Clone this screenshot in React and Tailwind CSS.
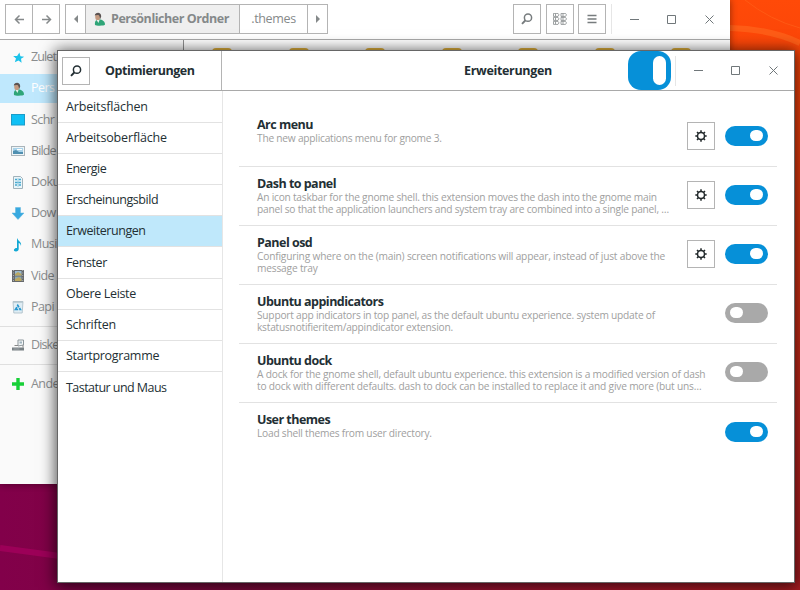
import React from 'react';

const places = [
    { label: 'Zulet', icon: 'star' },
    { label: 'Pers', icon: 'person', active: true },
    { label: 'Schr', icon: 'desktop' },
    { label: 'Bilde', icon: 'image' },
    { label: 'Doku', icon: 'doc' },
    { label: 'Dow', icon: 'download' },
    { label: 'Musi', icon: 'music' },
    { label: 'Vide', icon: 'video' },
    { label: 'Papi', icon: 'trash' },
];

const categories = [
    { label: 'Arbeitsflächen', tracking: 'tracking-[-0.15px]' },
    { label: 'Arbeitsoberfläche', tracking: 'tracking-[-0.15px]' },
    { label: 'Energie', tracking: 'tracking-[-0.5px]' },
    { label: 'Erscheinungsbild', tracking: 'tracking-[-0.44px]' },
    { label: 'Erweiterungen', tracking: 'tracking-[-0.44px]', active: true },
    { label: 'Fenster', tracking: 'tracking-[-0.4px]' },
    { label: 'Obere Leiste', tracking: 'tracking-[-0.33px]' },
    { label: 'Schriften', tracking: 'tracking-[-0.25px]' },
    { label: 'Startprogramme', tracking: 'tracking-[-0.28px]' },
    { label: 'Tastatur und Maus', tracking: 'tracking-[-0.54px]' },
];

const extensions = [
    { title: 'Arc menu', lines: ['The new applications menu for gnome 3.'], settings: true, on: true },
    {
        title: 'Dash to panel',
        lines: [
            'An icon taskbar for the gnome shell. this extension moves the dash into the gnome main',
            'panel so that the application launchers and system tray are combined into a single panel, …',
        ],
        settings: true,
        on: true,
    },
    {
        title: 'Panel osd',
        lines: ['Configuring where on the (main) screen notifications will appear, instead of just above the', 'message tray'],
        tracking: 'tracking-[-0.19px]',
        settings: true,
        on: true,
    },
    {
        title: 'Ubuntu appindicators',
        lines: ['Support app indicators in top panel, as the default ubuntu experience. system update of', 'kstatusnotifieritem/appindicator extension.'],
    },
    {
        title: 'Ubuntu dock',
        lines: [
            'A dock for the gnome shell, default ubuntu experience. this extension is a modified version of dash',
            'to dock with different defaults. dash to dock can be installed to replace it and give more (but uns…',
        ],
        tracking: 'tracking-[-0.2px]',
    },
    { title: 'User themes', lines: ['Load shell themes from user directory.'], on: true },
];

function PlaceIcon({ name }) {
    return (
        <svg viewBox="0 0 16 16" className="w-4 h-4 shrink-0">
            {name === 'star' && <path d="M9.400 2.600l1 3.700 3.800.5-3.200 2 .6 4-3.100-2.400-3.700 1.900 1.200-3.900L3.200 5.900l3.900.2z" fill="#1cc3ea" />}
            {name === 'person' && (
                <>
                    <path d="M4 14c-.5-4 1-5.500 4-5.500 3.500 0 6 2 6 5 0 1.500-9 1.500-10 .5z" fill="#2fa578" />
                    <ellipse cx="6.700" cy="5.800" rx="2.500" ry="3.500" fill="#c39a80" />
                    <path d="M3.800 4.500C4 1 10.500.5 10.200 5.500L9 8.500c0-2-.5-4-1.500-4.500C6 3.800 4.500 4 3.800 4.500z" fill="#5b5352" />
                    <path d="M5.500 9l2 3 1-3z" fill="#e8f0ec" />
                </>
            )}
            {name === 'desktop' && <rect x="1.500" y="2.500" width="13" height="10.500" fill="#0fc0f5" stroke="#1b9cc8" />}
            {name === 'image' && (
                <>
                    <rect x="1.500" y="3.500" width="13" height="9" fill="#eef4f7" stroke="#a9b4ba" />
                    <path d="M3 5h10v6H3z" fill="#a9d3ea" />
                    <path d="M3 11V8l3-1 3 2h4v2z" fill="#4f8fb0" />
                    <path d="M7 6h5v1H7z" fill="#fff" />
                </>
            )}
            {name === 'doc' && (
                <>
                    <path d="M3.500 2.500h7l2 2v10h-9z" fill="#eaf5fa" stroke="#a0b2ba" />
                    <path d="M5 5.500h2M8.500 5.500h2.500M5 8.500h6M5 11h2M8.500 11h2.500" stroke="#45a9cf" strokeWidth="1.300" />
                    <path d="M8 4v9" stroke="#9fd0e3" />
                </>
            )}
            {name === 'download' && <path d="M5.500 1.500h5V7H14l-6 6.500L2 7h3.500z" fill="#38a9e0" stroke="#5db4dd" strokeWidth=".5" />}
            {name === 'music' && (
                <path d="M7.500 1.500c.5 2.500 4.500 3.500 3.500 7.500-.3-1.800-1.300-2.800-2.300-3v6c0 1.500-1.200 2.500-2.700 2.500S3.500 13.700 4 12.500c.5-1.200 2-1.800 3-1.500V1.500z" fill="#12a8d4" />
            )}
            {name === 'video' && (
                <>
                    <rect x="2" y="2" width="12" height="12" fill="#66696c" />
                    <rect x="5" y="3" width="6.500" height="4.500" fill="#9ab9ce" />
                    <rect x="5" y="8.500" width="6.500" height="4.500" fill="#89a8b8" />
                    <path d="M5 6l3-2 3.500 2v1.500H5zM5 11l4-2 2.500 2v2H5z" fill="#bba860" />
                    <path d="M3.500 2v12M12.700 2v12" stroke="#a9adb0" strokeDasharray="1 1.500" />
                </>
            )}
            {name === 'trash' && (
                <>
                    <path d="M3 2.500h10l-.8 11.500H3.800z" fill="#dfedf4" stroke="#a8bbc5" strokeWidth=".8" />
                    <path d="M3 3h10" stroke="#b5c4cc" strokeWidth="1.500" />
                    <path d="M5.500 10.500L7.800 6.500l2.500 4z" fill="none" stroke="#2496cf" strokeWidth="1.700" strokeDasharray="2.800 1" />
                </>
            )}
            {name === 'disk' && (
                <>
                    <path d="M8 3h5.500v5L8 9z" fill="#f4f6f7" stroke="#8d979c" />
                    <path d="M9.500 4.500h2.500v2H9.500z" fill="#9fb3bd" />
                    <path d="M4.500 8.500H8M13 8v2.500" stroke="#888" />
                    <path d="M2 10.500h12V13.500H2z" fill="#777f83" />
                    <path d="M3.500 12h6" stroke="#a2a8aa" />
                </>
            )}
            {name === 'plus' && <path d="M6.300 2h3.400v4.300H14v3.400H9.700V14H6.300V9.700H2V6.300h4.300z" fill="#18d038" />}
        </svg>
    );
}

function Place({ label, icon, active }) {
    return (
        <li className={`flex items-center h-[31.2px] pl-2.5 gap-[5px] whitespace-nowrap ${active ? 'text-white' : 'text-[#8b8e8f]'}`}>
            <PlaceIcon name={icon} />
            <span className={`text-[12.5px] ${label.length > 4 ? 'tracking-[-0.9px]' : 'tracking-[-0.55px]'}`}>{label}</span>
        </li>
    );
}

function SearchIcon() {
    return (
        <svg viewBox="0 0 12 12" className="w-3 h-3" fill="none" stroke="currentColor">
            <circle cx="7" cy="4.700" r="3.600" strokeWidth="1.500" />
            <path d="M4.300 7.500L1 10.800" strokeWidth="1.900" />
        </svg>
    );
}

function GearIcon() {
    return (
        <svg viewBox="0 0 12 12" className="w-3 h-3" fill="none" stroke="#22292b">
            <circle cx="6" cy="6" r="3.500" strokeWidth="1.500" />
            <path d="M6 .3v2M6 9.700v2M.3 6h2M9.700 6h2M2 2l1.400 1.400M8.600 8.600L10 10M2 10l1.400-1.400M8.600 3.400L10 2" strokeWidth="1.500" />
        </svg>
    );
}

function WindowControls() {
    return (
        <div className="flex items-center w-[112.5px] text-[#70777a]">
            {['M1 5.500h9', 'M1.500 1.500h8v8h-8z', 'M1.500 1.500l8 8M9.500 1.500l-8 8'].map((d) => (
                <span key={d} className="flex-1 flex justify-center">
                    <svg viewBox="0 0 11 11" className="w-[11px] h-[11px]" fill="none" stroke="currentColor">
                        <path d={d} />
                    </svg>
                </span>
            ))}
        </div>
    );
}

function HeaderButton({ children }) {
    return <button className="w-7 h-[30px] border border-[#b4b4b4] flex items-center justify-center text-[#777c7e]">{children}</button>;
}

function Switch({ on }) {
    return (
        <span className={`w-[43px] h-5 -mt-[3px] rounded-full flex items-center px-[5px] shrink-0 ${on ? 'bg-[#0690d8] justify-end' : 'bg-[#a9a9a9]'}`}>
            <span className="w-[13px] h-[11px] rounded-full bg-white" />
        </span>
    );
}

function FilesWindow() {
    return (
        <div className="absolute left-0 top-0 w-[730px] h-[484px] bg-white flex flex-col overflow-hidden shadow-[0_0_7px_rgba(0,0,0,0.45)]">
            <header className="flex h-10 shrink-0 border-b border-[#a9a9a9] pt-1 pl-[5px] text-[#85898a]">
                <div className="flex h-[30px] w-[55px] border border-[#b4b4b4] divide-x divide-[#b4b4b4]">
                    {['M10 5.500H2M5.500 1.500l-4 4 4 4', 'M1 5.500h8M5.500 1.500l4 4-4 4'].map((d) => (
                        <button key={d} className="flex-1 flex items-center justify-center">
                            <svg viewBox="0 0 11 11" className="w-[11px] h-[11px]" fill="none" stroke="currentColor" strokeWidth="1.500">
                                <path d={d} />
                            </svg>
                        </button>
                    ))}
                </div>
                <div className="flex h-[30px] w-[263px] ml-[5px] border border-[#b4b4b4] divide-x divide-[#b4b4b4]">
                    <span className="w-5 flex items-center justify-center">
                        <svg viewBox="0 0 4 8" className="w-1 h-2" fill="currentColor"><path d="M4 0v8L0 4z" /></svg>
                    </span>
                    <span className="w-[154px] flex items-center pl-[5px] gap-1 bg-[#efefef]">
                        <PlaceIcon name="person" />
                        <span className="text-[12.5px] font-bold whitespace-nowrap tracking-[-0.45px]">Persönlicher Ordner</span>
                    </span>
                    <span className="w-[68px] flex items-center justify-center text-[12.5px] tracking-[-0.35px]">.themes</span>
                    <span className="flex-1 flex items-center justify-center">
                        <svg viewBox="0 0 4 8" className="w-1 h-2" fill="currentColor"><path d="M0 0v8l4-4z" /></svg>
                    </span>
                </div>
                <div className="ml-auto flex h-[30px] gap-[4.6px] pr-[2px]">
                    <HeaderButton><SearchIcon /></HeaderButton>
                    <HeaderButton>
                        <svg viewBox="0 0 14 12" className="w-3.5 h-3" fill="none" stroke="currentColor" strokeWidth=".7">
                            {[0, 7.5].map((x) => [0, 4, 8].map((y) => <path key={`${x}-${y}`} d={`M${x + 0.5} ${y + 0.4}h2v3h-2zM${x + 2.5} ${y + 0.4}h2.500l1 1.500-1 1.500h-2.500`} />))}
                        </svg>
                    </HeaderButton>
                    <HeaderButton>
                        <svg viewBox="0 0 10 10" className="w-2.5 h-2.5" stroke="currentColor" strokeWidth="1.500"><path d="M.5 1.500h9M.5 5h9M.5 8.500h9" /></svg>
                    </HeaderButton>
                    <div className="w-px h-[30px] -mr-px bg-[#e6e6e6]" />
                    <WindowControls />
                </div>
            </header>
            <div className="flex flex-1 min-h-0">
                <aside className="w-[183px] shrink-0 bg-[#fafafa] pt-[2px]">
                    <ul className="bg-[linear-gradient(#bfe8fd,#bfe8fd)] bg-no-repeat bg-[length:100%_29px] bg-[position:0_32px]">
                        {places.map((p) => <Place key={p.label} {...p} />)}
                    </ul>
                    <ul className="border-y border-[#dfdfdf] mt-[3px] py-[3px]">
                        <Place label="Diske" icon="disk" />
                    </ul>
                    <ul className="pt-[3.5px]">
                        <Place label="Ande" icon="plus" />
                    </ul>
                </aside>
                <main className="flex-1 border-l border-[#8f8f8f] pt-2 pl-7 flex gap-[56.5px] items-start">
                    {[1, 2, 3, 4, 5, 6, 7].map((n) => (
                        <span key={n} className="w-5 h-4 shrink-0 rounded-sm bg-[#e3b23c]" />
                    ))}
                </main>
            </div>
        </div>
    );
}

function TweaksWindow() {
    return (
        <div className="absolute left-[57px] top-[50px] w-[738px] h-[533px] bg-white border border-[#666] flex flex-col shadow-[0_2px_14px_2px_rgba(0,0,0,0.65)] text-[#232f34]">
            <header className="flex h-10 shrink-0 border-b border-[#a9a9a9] text-[12.5px] font-bold">
                <div className="w-[164px] flex items-center pl-1 border-r border-[#b4b4b4]">
                    <button className="w-7 h-7 border border-[#b4b4b4] flex items-center justify-center"><SearchIcon /></button>
                    <h1 className="ml-[15px] pt-px tracking-[-0.45px]">Optimierungen</h1>
                </div>
                <div className="flex-1 flex items-center pr-[2px]">
                    <h2 className="ml-[242px] w-[90px] pt-px whitespace-nowrap tracking-[-0.33px]">Erweiterungen</h2>
                    <span className="ml-auto w-[43px] h-[39px] rounded-[13px] bg-[#0690d8] flex items-center justify-end pr-[5px]">
                        <span className="w-[13px] h-[29px] rounded-full bg-white" />
                    </span>
                    <div className="w-px h-[30px] bg-[#e6e6e6] mx-1" />
                    <WindowControls />
                </div>
            </header>
            <div className="flex flex-1 min-h-0">
                <nav className="w-[165px] shrink-0 border-r border-[#e6e6e6] pt-[0.5px]">
                    {categories.map((c, i) => (
                        <div
                            key={c.label}
                            className={`h-[31.2px] px-2 pt-px flex items-center text-[12.5px] ${c.tracking} ${i < 9 ? 'border-b border-[#e2e2e2]' : ''} ${c.active ? 'bg-[#bfe8fb]' : ''}`}
                        >
                            {c.label}
                        </div>
                    ))}
                </nav>
                <main className="flex-1 min-w-0 pt-[17px] pl-4 pr-[17px]">
                    {extensions.map((e, i) => (
                        <section key={e.title} className={`h-[59.1px] flex items-center pl-[18px] pr-[9px] ${i < 5 ? 'border-b border-[#e2e2e2]' : ''}`}>
                            <div className="self-start pt-[9.5px] flex-1 min-w-0">
                                <h3 className="text-[12.5px] leading-[14px] font-bold tracking-[-0.52px]">{e.title}</h3>
                                {e.lines.map((l) => (
                                    <p key={l} className={`text-[10.2px] leading-[12.5px] text-[#a0a0a0] whitespace-nowrap ${e.tracking || 'tracking-[-0.23px]'}`}>{l}</p>
                                ))}
                            </div>
                            {e.settings && (
                                <button className="w-7 h-7 -mt-[3px] mr-[10px] border border-[#b4b4b4] flex items-center justify-center shrink-0"><GearIcon /></button>
                            )}
                            <Switch on={e.on} />
                        </section>
                    ))}
                </main>
            </div>
        </div>
    );
}

export default function App() {
    return (
        <div className="relative w-[800px] h-[590px] overflow-hidden font-['Open_Sans','Noto_Sans',sans-serif] bg-[linear-gradient(90deg,#82004a_0%,#7d0a3c_30%,#a01430_65%,#b51d22_100%)]">
            <div className="absolute right-0 top-0 w-[70px] h-[590px] bg-[linear-gradient(#ff4a08_0%,#f94208_14%,#dd3512_40%,#c0241e_75%,#a81c22_100%)]" />
            <svg className="absolute inset-0" width="800" height="590" fill="none">
                <path d="M730 28Q770 29 800 43" stroke="#ff6a1f" strokeWidth="6" opacity=".6" />
                <path d="M745 0Q770 20 800 28" stroke="#ff6a1f" opacity=".5" />
                <path d="M0 548L60 556" stroke="#9c0058" strokeWidth="6" />
            </svg>
            <FilesWindow />
            <TweaksWindow />
        </div>
    );
}
